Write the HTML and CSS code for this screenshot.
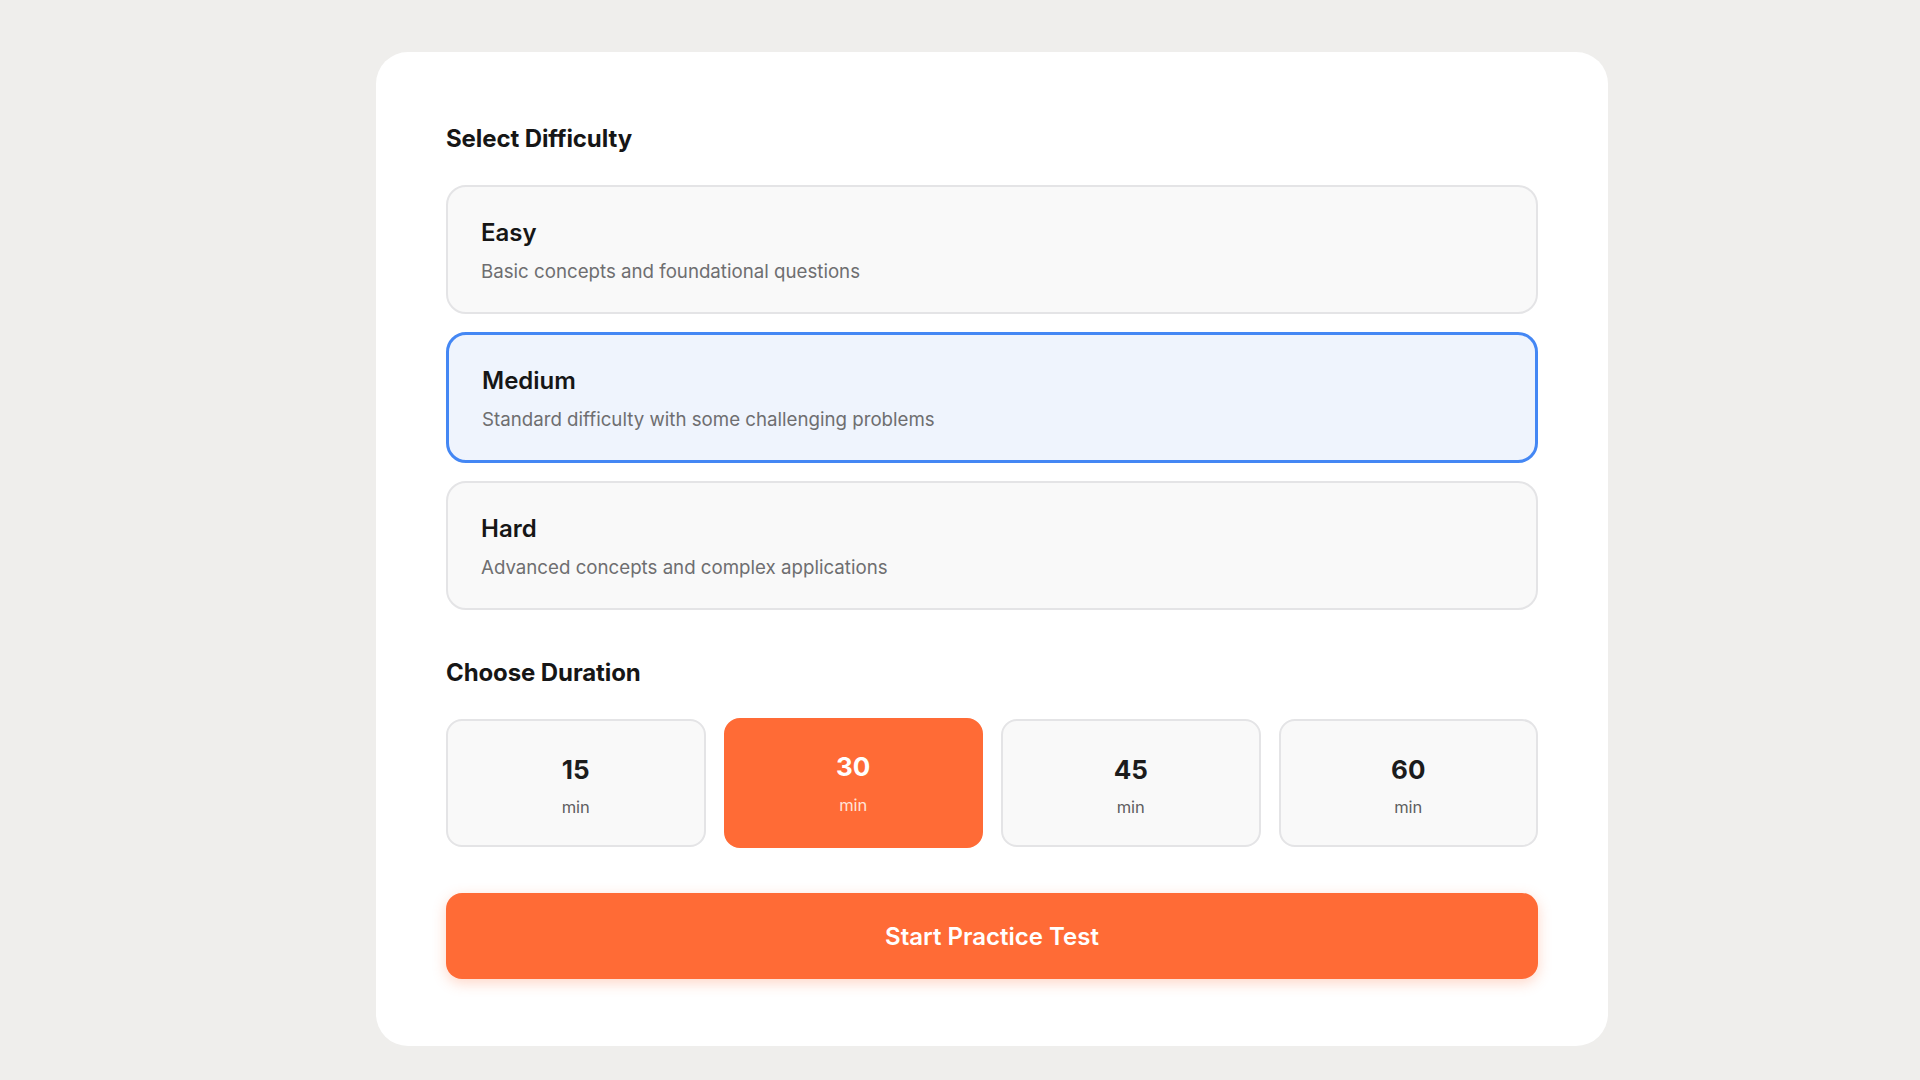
FILE: index.html
```html
<!DOCTYPE html>
<html lang="en">
<head>
<meta charset="utf-8">
<title>Practice Test Setup</title>
<link rel="stylesheet" href="styles.css">
</head>
<body>
  <main class="panel">
    <h2 class="section-title">Select Difficulty</h2>
    <div class="options">
      <div class="option">
        <div class="option-title">Easy</div>
        <div class="option-desc">Basic concepts and foundational questions</div>
      </div>
      <div class="option option-selected">
        <div class="option-title">Medium</div>
        <div class="option-desc">Standard difficulty with some challenging problems</div>
      </div>
      <div class="option">
        <div class="option-title">Hard</div>
        <div class="option-desc">Advanced concepts and complex applications</div>
      </div>
    </div>

    <h2 class="section-title section-title-duration">Choose Duration</h2>
    <div class="durations">
      <div class="duration">
        <div class="duration-num">15</div>
        <div class="duration-unit">min</div>
      </div>
      <div class="duration duration-selected">
        <div class="duration-num">30</div>
        <div class="duration-unit">min</div>
      </div>
      <div class="duration">
        <div class="duration-num">45</div>
        <div class="duration-unit">min</div>
      </div>
      <div class="duration">
        <div class="duration-num">60</div>
        <div class="duration-unit">min</div>
      </div>
    </div>

    <button class="start-btn" type="button">Start Practice Test</button>
  </main>
</body>
</html>
```

FILE: styles.css
```css
* {
  box-sizing: border-box;
}

html, body {
  margin: 0;
  padding: 0;
}

body {
  background: #efeeec;
  font-family: Inter, "Noto Sans", "Liberation Sans", sans-serif;
  color: #161616;
  min-height: 1080px;
  padding: 52px 0 0 376px;
}

.panel {
  width: 1232px;
  background: #ffffff;
  border-radius: 32px;
  padding: 72px 70px 67px;
}

.section-title {
  margin: 0 0 32px;
  font-size: 24px;
  line-height: 29px;
  font-weight: 700;
  color: #161616;
  letter-spacing: -0.1px;
}

.section-title-duration {
  margin-top: 48px;
}

.options {
  display: flex;
  flex-direction: column;
  gap: 18px;
}

.option {
  background: #f9f9f9;
  border: 2px solid #e4e4e6;
  border-radius: 20px;
  padding: 31px 33px 27px 33px;
}

.option-selected {
  background: #eff4fd;
  border: 3px solid #4487f4;
  min-height: 131px;
}

.option-title {
  font-size: 24px;
  line-height: 29px;
  font-weight: 600;
  color: #161616;
  margin-bottom: 11px;
}

.option-desc {
  font-size: 18.7px;
  line-height: 27px;
  color: #6e6e70;
}

.durations {
  display: grid;
  grid-template-columns: repeat(4, 1fr);
  gap: 18px;
}

.duration {
  background: #f9f9f9;
  border: 2px solid #e4e4e6;
  border-radius: 16px;
  height: 128px;
  padding: 33px 0 0;
  display: flex;
  flex-direction: column;
  align-items: center;
}

.duration-num {
  font-size: 26px;
  line-height: 31px;
  font-weight: 700;
  color: #1c1c1c;
}

.duration-unit {
  margin-top: 10px;
  font-size: 16.5px;
  line-height: 24px;
  color: #5e5e60;
}

.duration-selected {
  background: #ff6b36;
  border-color: #ff6b36;
  height: 130px;
  margin-top: -1px;
  padding-top: 31px;
}

.duration-selected .duration-num {
  color: #ffffff;
}

.duration-selected .duration-unit {
  margin-top: 11px;
  color: #ffe4d9;
}

.start-btn {
  display: block;
  width: 100%;
  height: 86px;
  margin-top: 45px;
  border: none;
  border-radius: 16px;
  background: #ff6b36;
  color: #ffffff;
  font-family: Inter, "Noto Sans", "Liberation Sans", sans-serif;
  font-size: 24px;
  font-weight: 600;
  box-shadow: 0 4px 14px rgba(255, 107, 54, 0.28);
  cursor: pointer;
}
```
